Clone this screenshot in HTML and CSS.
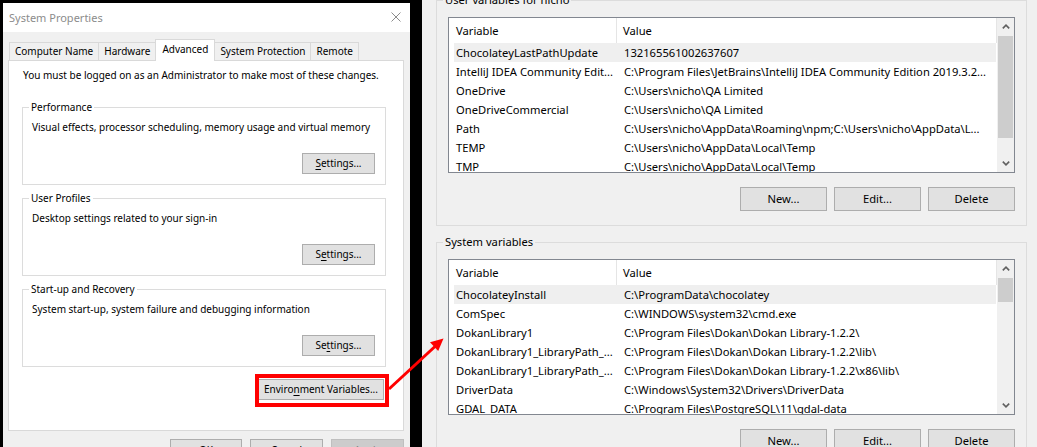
FILE: index.html
```html
<!DOCTYPE html>
<html lang="en">
<head>
<meta charset="utf-8">
<title>System Properties - Environment Variables</title>
<link rel="stylesheet" href="styles.css">
</head>
<body>
<div class="screen">
  <section class="sysprops">
    <header class="titlebar">
      <span class="title">System Properties</span>
      <svg class="close" width="10" height="10" viewBox="0 0 10 10"><path d="M0.5 0.5L9.5 9.5M9.5 0.5L0.5 9.5" stroke="#8c8c8c" stroke-width="1" fill="none"/></svg>
    </header>
    <div class="sp-body">
      <nav class="tabs">
        <div class="tab">Computer Name</div>
        <div class="tab">Hardware</div>
        <div class="tab active">Advanced</div>
        <div class="tab">System Protection</div>
        <div class="tab">Remote</div>
      </nav>
      <div class="panel">
        <p class="note">You must be logged on as an Administrator to make most of these changes.</p>
        <fieldset class="group">
          <legend>Performance</legend>
          <p class="desc">Visual effects, processor scheduling, memory usage and virtual memory</p>
          <div class="actions"><button class="btn settings"><u>S</u>ettings...</button></div>
        </fieldset>
        <fieldset class="group">
          <legend>User Profiles</legend>
          <p class="desc">Desktop settings related to your sign-in</p>
          <div class="actions"><button class="btn settings">S<u>e</u>ttings...</button></div>
        </fieldset>
        <fieldset class="group">
          <legend>Start-up and Recovery</legend>
          <p class="desc">System start-up, system failure and debugging information</p>
          <div class="actions"><button class="btn settings">Se<u>t</u>tings...</button></div>
        </fieldset>
        <div class="env-row">
          <span class="mark"><button class="btn env">Enviro<u>n</u>ment Variables...</button></span>
        </div>
      </div>
      <div class="dialog-buttons">
        <button class="btn dlg">OK</button>
        <button class="btn dlg">Cancel</button>
        <button class="btn dlg disabled">Apply</button>
      </div>
    </div>
  </section>

  <section class="envvars">
    <fieldset class="vgroup first">
      <legend>User variables for nicho</legend>
      <div class="listview">
        <div class="lv-main">
          <div class="lv-head"><div class="c1">Variable</div><div class="c2">Value</div></div>
          <div class="lv-row sel"><div class="c1">ChocolateyLastPathUpdate</div><div class="c2">132165561002637607</div></div>
          <div class="lv-row"><div class="c1">IntelliJ IDEA Community Edit...</div><div class="c2">C:\Program Files\JetBrains\IntelliJ IDEA Community Edition 2019.3.2...</div></div>
          <div class="lv-row"><div class="c1">OneDrive</div><div class="c2">C:\Users\nicho\QA Limited</div></div>
          <div class="lv-row"><div class="c1">OneDriveCommercial</div><div class="c2">C:\Users\nicho\QA Limited</div></div>
          <div class="lv-row"><div class="c1">Path</div><div class="c2">C:\Users\nicho\AppData\Roaming\npm;C:\Users\nicho\AppData\L...</div></div>
          <div class="lv-row"><div class="c1">TEMP</div><div class="c2">C:\Users\nicho\AppData\Local\Temp</div></div>
          <div class="lv-row"><div class="c1">TMP</div><div class="c2">C:\Users\nicho\AppData\Local\Temp</div></div>
        </div>
        <div class="scrollbar">
          <div class="sb-arrow"><svg width="8" height="5" viewBox="0 0 8 5"><path d="M0.8 4.4L4 1.2L7.2 4.4" stroke="#606060" stroke-width="1.6" fill="none"/></svg></div>
          <div class="sb-track"><div class="sb-thumb" style="height:102px"></div></div>
          <div class="sb-arrow"><svg width="8" height="5" viewBox="0 0 8 5"><path d="M0.8 0.6L4 3.8L7.2 0.6" stroke="#606060" stroke-width="1.6" fill="none"/></svg></div>
        </div>
      </div>
      <div class="vbuttons">
        <button class="btn vbtn">New...</button>
        <button class="btn vbtn">Edit...</button>
        <button class="btn vbtn">Delete</button>
      </div>
    </fieldset>

    <fieldset class="vgroup">
      <legend>System variables</legend>
      <div class="listview">
        <div class="lv-main">
          <div class="lv-head"><div class="c1">Variable</div><div class="c2">Value</div></div>
          <div class="lv-row sel"><div class="c1">ChocolateyInstall</div><div class="c2">C:\ProgramData\chocolatey</div></div>
          <div class="lv-row"><div class="c1">ComSpec</div><div class="c2">C:\WINDOWS\system32\cmd.exe</div></div>
          <div class="lv-row"><div class="c1">DokanLibrary1</div><div class="c2">C:\Program Files\Dokan\Dokan Library-1.2.2\</div></div>
          <div class="lv-row"><div class="c1">DokanLibrary1_LibraryPath_...</div><div class="c2">C:\Program Files\Dokan\Dokan Library-1.2.2\lib\</div></div>
          <div class="lv-row"><div class="c1">DokanLibrary1_LibraryPath_...</div><div class="c2">C:\Program Files\Dokan\Dokan Library-1.2.2\x86\lib\</div></div>
          <div class="lv-row"><div class="c1">DriverData</div><div class="c2">C:\Windows\System32\Drivers\DriverData</div></div>
          <div class="lv-row"><div class="c1">GDAL_DATA</div><div class="c2">C:\Program Files\PostgreSQL\11\gdal-data</div></div>
        </div>
        <div class="scrollbar">
          <div class="sb-arrow"><svg width="8" height="5" viewBox="0 0 8 5"><path d="M0.8 4.4L4 1.2L7.2 4.4" stroke="#606060" stroke-width="1.6" fill="none"/></svg></div>
          <div class="sb-track"><div class="sb-thumb" style="height:24px"></div></div>
          <div class="sb-arrow"><svg width="8" height="5" viewBox="0 0 8 5"><path d="M0.8 0.6L4 3.8L7.2 0.6" stroke="#606060" stroke-width="1.6" fill="none"/></svg></div>
        </div>
      </div>
      <div class="vbuttons">
        <button class="btn vbtn">New...</button>
        <button class="btn vbtn">Edit...</button>
        <button class="btn vbtn">Delete</button>
      </div>
    </fieldset>
  </section>

  <svg class="arrow" width="1037" height="447" viewBox="0 0 1037 447">
    <line x1="389" y1="389" x2="435" y2="346.5" stroke="#f00" stroke-width="3"/>
    <polygon points="443.5,338.5 438.2,351 430,342.2" fill="#f00"/>
  </svg>
</div>
</body>
</html>
```

FILE: styles.css
```css
* { box-sizing: border-box; }

html, body {
  margin: 0;
  padding: 0;
  background: #000;
}

body {
  font-family: "Noto Sans", "Segoe UI", "Liberation Sans", sans-serif;
  color: #000;
  overflow: hidden;
}

.screen {
  position: relative;
  display: flex;
  width: 1037px;
  height: 447px;
  overflow: hidden;
}

/* ---------- System Properties dialog ---------- */
.sysprops {
  width: 407px;
  flex: none;
  margin: 3px 12px 0 3px;
  background: #f0f0f0;
  display: flex;
  flex-direction: column;
  font-size: 10px;
}

.titlebar {
  height: 29px;
  flex: none;
  background: #fff;
  display: flex;
  align-items: center;
  justify-content: space-between;
  padding: 0 9px 0 6px;
}

.title {
  font-size: 11px;
  color: #8c8c8c;
  line-height: 16px;
}

.close { display: block; margin-top: -1px; }

.sp-body {
  padding: 7px 6px 0 5px;
}

.tabs {
  display: flex;
  align-items: flex-end;
  height: 21px;
  padding-left: 1px;
  position: relative;
  z-index: 1;
}

.tab {
  height: 18px;
  line-height: 17px;
  padding: 0 5px;
  border: 1px solid #d9d9d9;
  border-bottom: none;
  background: #f0f0f0;
  margin-left: -1px;
  white-space: nowrap;
}

.tab:first-child { margin-left: 0; }

.tab.active {
  height: 22px;
  line-height: 19px;
  margin-bottom: -1px;
  background: #fff;
  padding: 0 6px;
}

.panel {
  background: #fff;
  border: 1px solid #d9d9d9;
  height: 371px;
  padding: 6px 17px 0 13px;
}

.note {
  margin: 0 0 16px 1px;
  line-height: 16px;
  white-space: nowrap;
}

.group {
  margin: 0;
  border: 1px solid #dcdcdc;
  padding: 4px 10px 10px 9px;
  min-width: 0;
}

.group + .group { margin-top: 5px; }

.group legend {
  padding: 0 2px;
  margin-left: -3px;
  line-height: 16px;
}

.desc {
  margin: 0;
  line-height: 16px;
  white-space: nowrap;
}

.actions {
  display: flex;
  justify-content: flex-end;
  margin-top: 18px;
}

.btn {
  font-family: inherit;
  font-size: inherit;
  color: #000;
  background: #e1e1e1;
  border: 1px solid #adadad;
  border-radius: 0;
  padding: 0;
  margin: 0;
  text-align: center;
  white-space: nowrap;
}

.btn u { text-decoration-thickness: 1px; text-underline-offset: 2px; }

.settings {
  width: 73px;
  height: 21px;
  line-height: 19px;
}

.env-row {
  display: flex;
  justify-content: flex-end;
  margin-top: 12px;
  padding-right: 2px;
}

.mark {
  position: relative;
  display: block;
}

.mark::after {
  content: "";
  position: absolute;
  top: -5px;
  left: -3px;
  right: -5px;
  bottom: -7px;
  border: 4px solid #f00;
  pointer-events: none;
}

.env {
  display: block;
  width: 126px;
  height: 21px;
  line-height: 19px;
}

.dialog-buttons {
  display: flex;
  justify-content: flex-end;
  gap: 8px;
  margin-top: 8px;
}

.dlg {
  width: 73px;
  height: 23px;
  line-height: 21px;
}

.dlg:first-child { width: 72px; }

.dlg.disabled {
  background: #cccccc;
  border-color: #bfbfbf;
  color: #838383;
}

/* ---------- Environment Variables dialog ---------- */
.envvars {
  flex: 1;
  background: #f0f0f0;
  padding: 0 10px 0 14px;
  font-size: 11.2px;
}

.vgroup {
  margin: 8px 0 0 0;
  border: 1px solid #dcdcdc;
  padding: 9px 11px 14px 11px;
  min-width: 0;
}

.vgroup.first { margin-top: -8px; }

.vgroup legend {
  padding: 0 2px;
  margin-left: -5px;
  line-height: 16px;
}

.listview {
  display: flex;
  height: 156px;
  border: 1px solid #828790;
  background: #fff;
  overflow: hidden;
}

.lv-main {
  flex: 1;
  min-width: 0;
  overflow: hidden;
}

.lv-head {
  display: flex;
  height: 25px;
  line-height: 25px;
}

.lv-head .c1 {
  width: 168px;
  padding-left: 7px;
  border-right: 1px solid #e5e5e5;
  flex: none;
}

.lv-head .c2 {
  flex: 1;
  padding-left: 6px;
  border-right: 1px solid #e5e5e5;
}

.lv-row {
  display: flex;
  height: 19px;
  line-height: 19px;
  margin: 0 1px 0 5px;
  white-space: nowrap;
}

.lv-row.sel { background: #efefef; }

.lv-row .c1 {
  width: 163px;
  flex: none;
  padding-left: 2px;
  overflow: hidden;
}

.lv-row .c2 {
  flex: 1;
  min-width: 0;
  padding-left: 7px;
  overflow: hidden;
}

.scrollbar {
  width: 17px;
  flex: none;
  background: #f0f0f0;
  display: flex;
  flex-direction: column;
}

.sb-arrow {
  height: 17px;
  flex: none;
  display: flex;
  align-items: center;
  justify-content: center;
}

.sb-arrow svg { display: block; }

.sb-track {
  flex: 1;
  padding: 1px 1px 0 1px;
}

.sb-thumb {
  background: #cdcdcd;
}

.vbuttons {
  display: flex;
  justify-content: flex-end;
  gap: 7px;
  margin-top: 14px;
}

.vbtn {
  width: 87px;
  height: 24px;
  line-height: 22px;
}

/* ---------- annotation arrow ---------- */
.arrow {
  position: absolute;
  left: 0;
  top: 0;
  pointer-events: none;
  z-index: 5;
}
```
